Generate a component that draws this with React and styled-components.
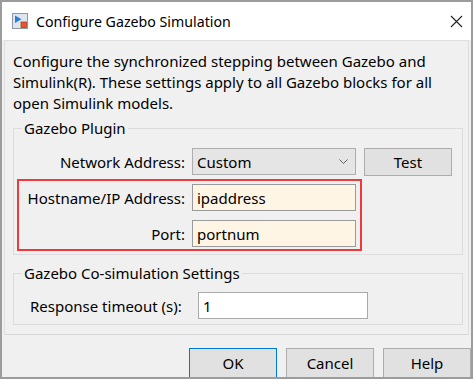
import React from "react";
import styled, { createGlobalStyle } from "styled-components";

const GlobalStyle = createGlobalStyle`
  html, body {
    margin: 0;
    padding: 0;
    background: #ffffff;
  }
  body {
    font-family: "Segoe UI", "Noto Sans", sans-serif;
    font-size: 15px;
    color: #000000;
  }
`;

const Window = styled.div`
  box-sizing: border-box;
  width: 473px;
  height: 379px;
  border: 2px solid #9c9c9c;
  background: #f0f0f0;
  display: flex;
  flex-direction: column;
  overflow: hidden;
`;

const TitleBar = styled.div`
  height: 38px;
  flex: none;
  background: #ffffff;
  display: flex;
  align-items: center;
  padding: 0 8px 0 10px;
  gap: 8px;
`;

const Title = styled.span`
  flex: 1;
  font-size: 14.2px;
  color: #000000;
`;

const Panel = styled.div`
  margin: 0 2px;
  border: 1px solid #dedede;
  border-bottom-color: #d8d8d8;
  padding: 10px 5px 9px 8px;
  display: flex;
  flex-direction: column;
`;

const Description = styled.p`
  margin: 0 0 4px 0;
  line-height: 21px;
  white-space: nowrap;
`;

const Group = styled.fieldset`
  margin: 0;
  padding: 0;
  border: 1px solid #dcdcdc;
  min-width: 0;
  & + & {
    margin-top: 8px;
  }
`;

const Legend = styled.legend`
  margin-left: 8px;
  padding: 0 2px;
  line-height: 21px;
`;

const GroupBody = styled.div`
  display: flex;
  flex-direction: column;
  align-items: flex-start;
  padding: ${(p) => p.$pad};
`;

const Row = styled.div`
  display: flex;
  align-items: center;
  height: 27px;
  gap: ${(p) => p.$gap ?? 7}px;
  & + & {
    margin-top: 9px;
  }
`;

const Label = styled.label`
  width: ${(p) => p.$w}px;
  flex: none;
  text-align: ${(p) => p.$align || "right"};
  white-space: nowrap;
`;

const Highlight = styled.div`
  margin-top: 4px;
  border: 2px solid #ec3b3f;
  padding: 3px 4px 2px 2px;
`;

const Field = styled.div`
  box-sizing: border-box;
  width: ${(p) => p.$w}px;
  height: 27px;
  border: 1px solid ${(p) => (p.$white ? "#a9a9a9" : "#9a9a9a")};
  background: ${(p) => (p.$white ? "#ffffff" : "#fff5e4")};
  display: flex;
  align-items: center;
  padding-left: 4px;
`;

const Combo = styled.div`
  box-sizing: border-box;
  width: 164px;
  height: 27px;
  border: 1px solid #adadad;
  background: #e5e5e5;
  display: flex;
  align-items: center;
  justify-content: space-between;
  padding: 0 7px 0 4px;
`;

const Button = styled.button`
  box-sizing: border-box;
  width: ${(p) => p.$w || 88}px;
  height: ${(p) => p.$h || 28}px;
  border: 1px solid ${(p) => (p.$default ? "#0078d7" : "#adadad")};
  background: #e1e1e1;
  font: inherit;
  font-size: 15px;
  color: #000000;
  padding: 0;
  margin-left: ${(p) => p.$ml || 0}px;
`;

const Footer = styled.div`
  display: flex;
  justify-content: flex-end;
  align-items: flex-start;
  gap: 9px;
  padding-top: 13px;
`;

const AppIcon = () => (
  <svg width="16" height="16" viewBox="0 0 16 16">
    <rect x="0.5" y="0.5" width="15" height="15" fill="#dde6ee" stroke="#8c9aa8" />
    <polygon points="3,2.5 3,10 9.5,6.2" fill="#2b7fd3" />
    <rect x="9" y="9" width="5.5" height="5.5" fill="#e4572e" stroke="#b8391a" strokeWidth="0.8" />
  </svg>
);

const CloseIcon = () => (
  <svg width="13" height="13" viewBox="0 0 13 13">
    <path d="M1 1 L12 12 M12 1 L1 12" stroke="#222" strokeWidth="1.1" />
  </svg>
);

const Chevron = () => (
  <svg width="9" height="5" viewBox="0 0 9 5">
    <path d="M0.5 0.5 L4.5 4.5 L8.5 0.5" fill="none" stroke="#606060" strokeWidth="1" />
  </svg>
);

export default function App() {
  return (
    <>
      <GlobalStyle />
      <Window>
        <TitleBar>
          <AppIcon />
          <Title>Configure Gazebo Simulation</Title>
          <CloseIcon />
        </TitleBar>
        <Panel>
          <Description>
            Configure the synchronized stepping between Gazebo and
            <br />
            Simulink(R). These settings apply to all Gazebo blocks for all
            <br />
            open Simulink models.
          </Description>
          <Group>
            <Legend>Gazebo Plugin</Legend>
            <GroupBody $pad="9px 0 3px 3px">
              <Row>
                <Label $w={168}>Network Address:</Label>
                <Combo>
                  <span>Custom</span>
                  <Chevron />
                </Combo>
                <Button $ml={1}>Test</Button>
              </Row>
              <Highlight>
                <Row>
                  <Label $w={164}>Hostname/IP Address:</Label>
                  <Field $w={164}>ipaddress</Field>
                </Row>
                <Row>
                  <Label $w={164}>Port:</Label>
                  <Field $w={164}>portnum</Field>
                </Row>
              </Highlight>
            </GroupBody>
          </Group>
          <Group>
            <Legend>Gazebo Co-simulation Settings</Legend>
            <GroupBody $pad="8px 0 5px 16px">
              <Row $gap={0}>
                <Label $w={168} $align="left">Response timeout (s):</Label>
                <Field $w={170} $white>1</Field>
              </Row>
            </GroupBody>
          </Group>
        </Panel>
        <Footer>
          <Button $default $h={30}>OK</Button>
          <Button $h={30}>Cancel</Button>
          <Button $h={30}>Help</Button>
        </Footer>
      </Window>
    </>
  );
}
